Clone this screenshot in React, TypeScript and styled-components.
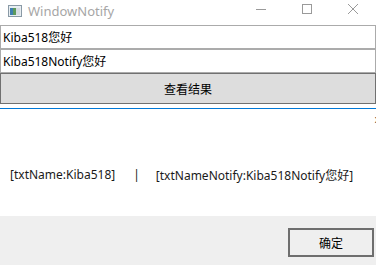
import React from "react";
import styled, { createGlobalStyle } from "styled-components";

const Global = createGlobalStyle`
  html, body { margin: 0; padding: 0; background: #ffffff; }
  body { font-family: "Noto Sans", "Noto Sans CJK SC", sans-serif; }
  #root { width: 376px; height: 265px; overflow: hidden; }
`;

const Window = styled.div`
  width: 376px;
  height: 265px;
  display: flex;
  flex-direction: column;
  background: #ffffff;
`;

const TitleBar = styled.div`
  height: 25px;
  display: flex;
  align-items: center;
  flex-shrink: 0;
`;

const AppIcon = styled.svg`
  margin-left: 8px;
  width: 14px;
  height: 12px;
  margin-top: -4px;
`;

const Title = styled.span`
  margin-left: 6px;
  margin-top: -4px;
  font-family: "Noto Sans", "Noto Sans CJK SC", sans-serif;
  font-size: 13px;
  color: #a6a6a6;
  flex: 1;
`;

const Controls = styled.div`
  display: flex;
  height: 100%;
`;

const ControlButton = styled.div`
  width: 46px;
  height: 100%;
  display: flex;
  align-items: flex-start;
  justify-content: center;
  padding-top: 4px;
  box-sizing: border-box;
`;

const TextBox = styled.div`
  height: 24px;
  border: 1px solid #ababab;
  box-sizing: border-box;
  display: flex;
  align-items: center;
  padding-left: 2px;
  font-family: "Noto Sans", "Noto Sans CJK SC", sans-serif;
  font-size: 12px;
  color: #000;
  flex-shrink: 0;
`;

const ActionButton = styled.div`
  height: 31px;
  border: 1px solid #707070;
  background: #dddddd;
  box-sizing: border-box;
  display: flex;
  align-items: center;
  justify-content: center;
  font-family: "Noto Sans CJK SC", sans-serif;
  font-size: 12px;
  color: #000;
  flex-shrink: 0;
`;

const Content = styled.div`
  flex: 1;
  margin-top: 4px;
  border-top: 1px solid #0078d7;
  position: relative;
  display: flex;
  align-items: center;
  padding-left: 10px;
  padding-top: 24px;
  font-family: "Noto Sans", "Noto Sans CJK SC", sans-serif;
  font-size: 12px;
  color: #1a1a1a;
  white-space: pre;
`;

const Part = styled.span<{ $gap?: number }>`
  margin-left: ${(p) => p.$gap ?? 0}px;
`;

const EdgeMark = styled.span`
  position: absolute;
  right: -4px;
  top: 3px;
  font-size: 10px;
  color: #333;
`;

const Footer = styled.div`
  height: 49px;
  background: #efefef;
  display: flex;
  justify-content: flex-end;
  align-items: flex-start;
  padding: 12px 2px 0 0;
  box-sizing: border-box;
  flex-shrink: 0;
`;

const OkButton = styled.div`
  width: 86px;
  height: 29px;
  border: 2px solid #6e6e6e;
  background: #efefef;
  box-sizing: border-box;
  display: flex;
  align-items: center;
  justify-content: center;
  font-family: "Noto Sans CJK SC", sans-serif;
  font-size: 12px;
  color: #000;
`;

export default function App() {
  return (
    <>
      <Global />
      <Window>
        <TitleBar>
          <AppIcon viewBox="0 0 14 12">
            <rect x="0.5" y="0.5" width="13" height="11" fill="#e8eef2" stroke="#8a9aa6" />
            <rect x="2" y="3" width="3" height="7" fill="#3f7fb0" />
            <rect x="5" y="3" width="3" height="7" fill="#5c9a5c" />
            <rect x="8" y="3" width="4" height="7" fill="#d6dde3" />
          </AppIcon>
          <Title>WindowNotify</Title>
          <Controls>
            <ControlButton>
              <svg width="10" height="10" viewBox="0 0 10 10">
                <line x1="0" y1="5.5" x2="10" y2="5.5" stroke="#9a9a9a" strokeWidth="1" />
              </svg>
            </ControlButton>
            <ControlButton>
              <svg width="10" height="10" viewBox="0 0 10 10">
                <rect x="0.5" y="0.5" width="9" height="9" fill="none" stroke="#9a9a9a" strokeWidth="1" />
              </svg>
            </ControlButton>
            <ControlButton>
              <svg width="10" height="10" viewBox="0 0 10 10">
                <path d="M0 0 L10 10 M10 0 L0 10" stroke="#9a9a9a" strokeWidth="1" />
              </svg>
            </ControlButton>
          </Controls>
        </TitleBar>
        <TextBox>Kiba518您好</TextBox>
        <TextBox>Kiba518Notify您好</TextBox>
        <ActionButton>查看结果</ActionButton>
        <Content>
          <EdgeMark>x</EdgeMark>
          <Part>[txtName:Kiba518]</Part>
          <Part $gap={18}>|</Part>
          <Part $gap={16}>[txtNameNotify:Kiba518Notify您好]</Part>
        </Content>
        <Footer>
          <OkButton>确定</OkButton>
        </Footer>
      </Window>
    </>
  );
}
